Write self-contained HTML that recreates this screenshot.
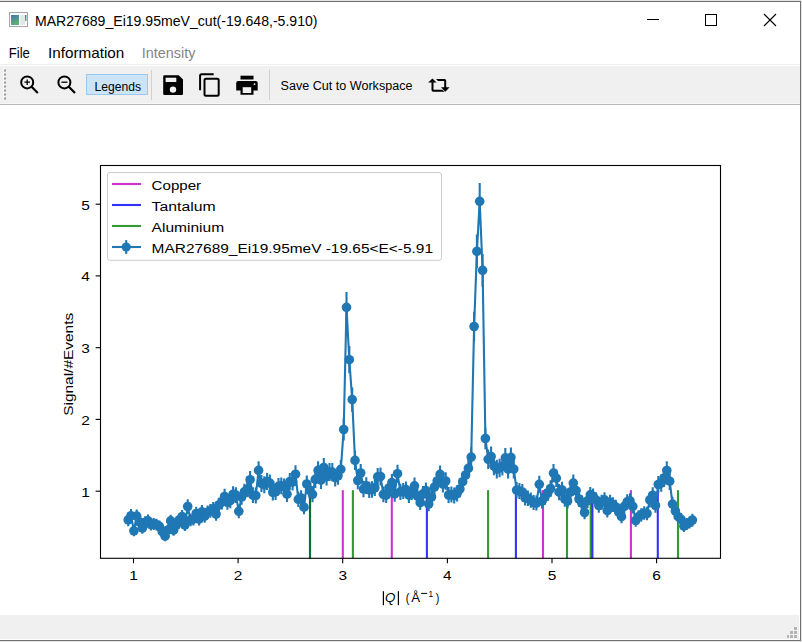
<!DOCTYPE html><html><head><meta charset="utf-8"><style>html,body{margin:0;padding:0;background:#fff;overflow:hidden}svg{display:block}</style></head><body>
<svg width="802" height="642" viewBox="0 0 802 642" font-family='"Liberation Sans", sans-serif'>
<rect x="0" y="0" width="802" height="642" fill="#ffffff"/>
<rect x="0" y="64" width="800" height="1" fill="#eeeeee"/>
<rect x="0" y="66" width="800" height="37" fill="#f0f0f0"/>
<rect x="0" y="103" width="800" height="1" fill="#f7f7f7"/>
<rect x="0" y="104" width="800" height="1" fill="#bababa"/>
<rect x="0" y="615" width="799" height="24" fill="#f0f0f0"/>
<rect x="0" y="0" width="802" height="1" fill="#e4e4e4"/>
<rect x="0" y="1" width="801" height="1" fill="#707070"/>
<rect x="800" y="1" width="1" height="640" fill="#707070"/>
<rect x="801" y="0" width="1" height="642" fill="#e4e4e4"/>
<rect x="0" y="640" width="801" height="1" fill="#707070"/>
<rect x="0" y="641" width="802" height="1" fill="#e4e4e4"/>
<rect x="794" y="627" width="3" height="3" fill="#b4b4b4"/>
<rect x="790" y="631" width="3" height="3" fill="#b4b4b4"/>
<rect x="794" y="631" width="3" height="3" fill="#b4b4b4"/>
<rect x="787" y="635" width="2" height="3" fill="#b4b4b4"/>
<rect x="790" y="635" width="3" height="3" fill="#b4b4b4"/>
<rect x="794" y="635" width="3" height="3" fill="#b4b4b4"/>
<rect x="9.5" y="12.5" width="18" height="14" fill="#ffffff" stroke="#a2a6ad" stroke-width="1"/>
<defs><linearGradient id="ig" x1="0" y1="0" x2="0.3" y2="1"><stop offset="0" stop-color="#4677b4"/><stop offset="1" stop-color="#5cb070"/></linearGradient></defs>
<rect x="11" y="15" width="8" height="10" fill="url(#ig)"/>
<rect x="20" y="15" width="5" height="10" fill="#e6e6e6"/>
<rect x="25" y="15" width="1.5" height="6" fill="url(#ig)"/>
<text x="35" y="25.8" font-size="15" fill="#000" textLength="282.5" lengthAdjust="spacingAndGlyphs">MAR27689_Ei19.95meV_cut(-19.648,-5.910)</text>
<rect x="647" y="19" width="12" height="1" fill="#000"/>
<rect x="705.5" y="14.5" width="11" height="11" fill="none" stroke="#000" stroke-width="1"/>
<path d="M764 14 L776 26 M776 14 L764 26" stroke="#000" stroke-width="1.1" fill="none"/>
<text x="8.7" y="57.5" font-size="15" fill="#000" textLength="21.2" lengthAdjust="spacingAndGlyphs">File</text>
<text x="48" y="57.5" font-size="15" fill="#000" textLength="76.3" lengthAdjust="spacingAndGlyphs">Information</text>
<text x="141.8" y="57.5" font-size="15" fill="#858585" textLength="53.6" lengthAdjust="spacingAndGlyphs">Intensity</text>
<rect x="3" y="68.5" width="2" height="2" fill="#ffffff"/>
<rect x="4" y="69.5" width="2" height="2" fill="#9a9a9a"/>
<rect x="3" y="72.5" width="2" height="2" fill="#ffffff"/>
<rect x="4" y="73.5" width="2" height="2" fill="#9a9a9a"/>
<rect x="3" y="76.5" width="2" height="2" fill="#ffffff"/>
<rect x="4" y="77.5" width="2" height="2" fill="#9a9a9a"/>
<rect x="3" y="80.5" width="2" height="2" fill="#ffffff"/>
<rect x="4" y="81.5" width="2" height="2" fill="#9a9a9a"/>
<rect x="3" y="84.5" width="2" height="2" fill="#ffffff"/>
<rect x="4" y="85.5" width="2" height="2" fill="#9a9a9a"/>
<rect x="3" y="88.5" width="2" height="2" fill="#ffffff"/>
<rect x="4" y="89.5" width="2" height="2" fill="#9a9a9a"/>
<rect x="3" y="92.5" width="2" height="2" fill="#ffffff"/>
<rect x="4" y="93.5" width="2" height="2" fill="#9a9a9a"/>
<rect x="3" y="96.5" width="2" height="2" fill="#ffffff"/>
<rect x="4" y="97.5" width="2" height="2" fill="#9a9a9a"/>
<circle cx="27.2" cy="82.4" r="6" fill="none" stroke="#000" stroke-width="2"/>
<path d="M31.6 86.8 L37.8 93" stroke="#000" stroke-width="2.2" stroke-linecap="butt"/>
<path d="M24.4 82.2 H30 M27.2 79.4 V85" stroke="#000" stroke-width="1.3"/>
<circle cx="64.4" cy="82.4" r="6" fill="none" stroke="#000" stroke-width="2"/>
<path d="M68.8 86.8 L75 93" stroke="#000" stroke-width="2.2"/>
<path d="M61.4 82.2 H67.4" stroke="#000" stroke-width="1.3"/>
<rect x="86.5" y="74.5" width="61" height="20" fill="#cce4f7" stroke="#99c9ef" stroke-width="1"/>
<text x="94.5" y="90.5" font-size="12.5" fill="#000" textLength="46.5" lengthAdjust="spacingAndGlyphs">Legends</text>
<rect x="151" y="70" width="1" height="30" fill="#d0d0d0"/>
<rect x="269" y="70" width="1" height="30" fill="#d0d0d0"/>
<path d="M163.2 76.5 Q163.2 75.2 164.5 75.2 L178.7 75.2 L183 79.5 L183 93.7 Q183 95 181.7 95 L164.5 95 Q163.2 95 163.2 93.7 Z" fill="#000"/>
<rect x="165.6" y="77.7" width="10.7" height="4.3" fill="#f0f0f0"/>
<circle cx="173" cy="89.6" r="3.2" fill="#f0f0f0"/>
<path d="M200.1 90.2 V75.8 Q200.1 74.2 201.7 74.2 H213.7" fill="none" stroke="#000" stroke-width="2"/>
<rect x="204.5" y="78.7" width="14.2" height="17" rx="1.5" fill="none" stroke="#000" stroke-width="2"/>
<rect x="240.5" y="75.7" width="13" height="3.8" fill="#000"/>
<path d="M236.2 83 Q236.2 81 238.2 81 L255.7 81 Q257.7 81 257.7 83 L257.7 90.5 L253.5 90.5 L253.5 94.7 L240.5 94.7 L240.5 90.5 L236.2 90.5 Z" fill="#000"/>
<rect x="242.7" y="87.2" width="8.5" height="5.8" fill="#f0f0f0"/>
<circle cx="254.5" cy="84.2" r="0.9" fill="#f0f0f0"/>
<text x="280.5" y="90" font-size="12.5" fill="#000" textLength="132" lengthAdjust="spacingAndGlyphs">Save Cut to Workspace</text>
<path d="M432.4 78.4 L428.2 82.6 L436.6 82.6 Z" fill="#000"/>
<path d="M431.5 82 V90 Q431.5 91.7 433.2 91.7 H444.5 L442.5 89.7 H433.5 V82 Z" fill="#000"/>
<path d="M436 79 H444.5 Q446.2 79 446.2 80.7 V88 H444.2 V81 H438 Z" fill="#000"/>
<path d="M441 87.3 L449.6 87.3 L445.3 91.8 Z" fill="#000"/>
<line x1="310.0" y1="558.3" x2="310.0" y2="490.15999999999997" stroke="#0000ff" stroke-opacity="0.8" stroke-width="2.1"/>
<line x1="310.0" y1="558.3" x2="310.0" y2="490.15999999999997" stroke="#008000" stroke-opacity="0.8" stroke-width="2.1"/>
<line x1="342.8" y1="558.3" x2="342.8" y2="490.15999999999997" stroke="#bf00bf" stroke-opacity="0.8" stroke-width="2.1"/>
<line x1="352.9" y1="558.3" x2="352.9" y2="490.15999999999997" stroke="#008000" stroke-opacity="0.8" stroke-width="2.1"/>
<line x1="391.8" y1="558.3" x2="391.8" y2="490.15999999999997" stroke="#bf00bf" stroke-opacity="0.8" stroke-width="2.1"/>
<line x1="426.9" y1="558.3" x2="426.9" y2="490.15999999999997" stroke="#0000ff" stroke-opacity="0.8" stroke-width="2.1"/>
<line x1="488.1" y1="558.3" x2="488.1" y2="490.15999999999997" stroke="#008000" stroke-opacity="0.8" stroke-width="2.1"/>
<line x1="515.9" y1="558.3" x2="515.9" y2="490.15999999999997" stroke="#0000ff" stroke-opacity="0.8" stroke-width="2.1"/>
<line x1="543.0" y1="558.3" x2="543.0" y2="490.15999999999997" stroke="#bf00bf" stroke-opacity="0.8" stroke-width="2.1"/>
<line x1="567.0" y1="558.3" x2="567.0" y2="490.15999999999997" stroke="#008000" stroke-opacity="0.8" stroke-width="2.1"/>
<line x1="590.7" y1="558.3" x2="590.7" y2="490.15999999999997" stroke="#008000" stroke-opacity="0.8" stroke-width="2.1"/>
<line x1="592.4" y1="558.3" x2="592.4" y2="490.15999999999997" stroke="#0000ff" stroke-opacity="0.8" stroke-width="2.1"/>
<line x1="630.9" y1="558.3" x2="630.9" y2="490.15999999999997" stroke="#bf00bf" stroke-opacity="0.8" stroke-width="2.1"/>
<line x1="657.8" y1="558.3" x2="657.8" y2="490.15999999999997" stroke="#0000ff" stroke-opacity="0.8" stroke-width="2.1"/>
<line x1="678.0" y1="558.3" x2="678.0" y2="490.15999999999997" stroke="#008000" stroke-opacity="0.8" stroke-width="2.1"/>
<path d="M128.2 513.6V526.2M131.0 509.1V522.3M133.9 525.4V536.2M136.7 509.5V522.7M139.5 515.9V528.1M142.4 522.3V533.7M145.2 516.3V528.5M148.0 514.6V527.0M150.9 518.6V530.4M153.7 517.9V529.9M156.5 518.8V530.6M159.4 520.5V532.1M162.2 526.2V537.0M165.1 531.2V541.2M167.9 524.5V535.5M170.7 514.7V527.1M173.6 524.7V535.7M176.4 519.1V530.9M179.2 513.7V526.3M182.1 510.1V523.1M184.9 519.2V531.0M187.7 499.3V513.7M190.6 513.7V526.3M193.4 512.9V525.5M196.2 506.8V520.2M199.1 512.9V525.5M201.9 505.1V518.7M204.7 509.5V522.7M207.6 505.4V519.0M210.4 504.0V517.8M213.2 501.9V515.9M216.1 507.4V520.8M218.9 497.7V512.3M221.8 494.5V509.5M224.6 488.7V504.3M227.4 495.0V509.8M230.3 493.0V508.2M233.1 486.3V502.1M235.9 487.2V503.0M238.8 504.4V518.2M241.6 489.2V504.8M244.4 483.8V500.0M247.3 480.8V497.2M250.1 471.0V488.4M252.9 487.3V503.1M255.8 487.6V503.4M258.6 461.2V479.6M261.4 474.9V491.9M264.3 476.3V493.3M267.1 472.9V490.1M269.9 474.5V491.7M272.8 484.4V500.4M275.6 483.7V499.9M278.5 477.9V494.7M281.3 477.4V494.2M284.1 478.4V495.2M287.0 486.3V502.1M289.8 473.0V490.2M292.6 473.4V490.6M295.5 465.2V483.2M298.3 491.7V506.9M301.1 490.3V505.7M304.0 500.1V514.3M306.8 475.5V492.5M309.6 481.8V498.2M312.5 486.4V502.2M315.3 470.7V488.1M318.1 461.2V479.6M321.0 471.5V488.9M323.8 458.1V476.9M326.6 467.6V485.4M329.5 462.9V481.1M332.3 463.0V481.2M335.2 468.9V486.5M338.0 466.9V484.7M340.8 460.0V478.6M343.7 418.4V440.6M346.5 292.1V322.7M349.3 346.1V373.3M352.2 387.4V411.8M355.0 450.7V470.1M357.8 471.8V489.2M360.7 463.9V482.1M363.5 480.8V497.2M366.3 477.3V494.1M369.2 481.7V498.1M372.0 481.3V497.7M374.8 479.5V496.1M377.7 467.9V485.7M380.5 467.6V485.4M383.4 486.4V502.2M386.2 487.3V503.1M389.0 479.7V496.3M391.9 474.0V491.2M394.7 485.8V501.8M397.5 464.7V482.7M400.4 483.8V500.0M403.2 482.9V499.1M406.0 481.4V497.8M408.9 487.3V503.1M411.7 483.9V500.1M414.5 477.4V494.2M417.4 488.2V503.8M420.2 495.3V510.1M423.0 486.1V501.9M425.9 482.5V498.7M428.7 496.7V511.3M431.5 489.2V504.8M434.4 478.8V495.4M437.2 472.3V489.7M440.1 465.4V483.4M442.9 475.5V492.5M445.7 472.3V489.7M448.6 487.1V502.9M451.4 486.6V502.4M454.2 487.6V503.4M457.1 485.6V501.6M459.9 480.8V497.2M462.7 473.1V490.3M465.6 466.0V484.0M468.4 459.1V477.7M471.2 447.3V466.9M474.1 311.8V341.2M476.9 234.5V268.3M479.7 183.1V219.5M482.6 253.9V286.7M485.4 427.8V449.2M488.2 449.6V469.0M491.1 446.6V466.4M493.9 456.4V475.2M496.8 459.8V478.4M499.6 458.7V477.3M502.4 456.6V475.4M505.3 448.1V467.7M508.1 459.8V478.4M510.9 447.6V467.2M513.8 459.8V478.4M516.6 481.9V498.3M519.4 482.9V499.1M522.3 483.9V500.1M525.1 490.2V505.6M527.9 490.6V506.0M530.8 492.6V507.8M533.6 495.1V509.9M536.4 495.6V510.4M539.3 475.8V492.8M542.1 493.5V508.5M544.9 489.2V504.8M547.8 485.0V501.0M550.6 480.2V496.8M553.5 464.0V482.2M556.3 469.4V487.0M559.1 484.1V500.3M562.0 481.7V498.1M564.8 491.3V506.7M567.6 493.6V508.6M570.5 483.9V500.1M573.3 474.5V491.7M576.1 482.5V498.7M579.0 491.3V506.7M581.8 495.6V510.4M584.6 505.7V519.3M587.5 493.3V508.3M590.3 486.9V502.7M593.1 488.4V504.0M596.0 492.4V507.6M598.8 498.2V512.8M601.6 494.7V509.7M604.5 492.3V507.5M607.3 503.8V517.6M610.1 494.7V509.7M613.0 497.3V511.9M615.8 499.8V514.2M618.7 505.2V518.8M621.5 510.2V523.2M624.3 499.2V513.6M627.2 494.3V509.3M630.0 493.3V508.3M632.8 499.2V513.6M635.7 514.3V526.7M638.5 510.2V523.2M641.3 508.3V521.5M644.2 506.2V519.8M647.0 506.8V520.2M649.8 492.3V507.5M652.7 487.3V503.1M655.5 498.2V512.8M658.3 476.0V493.0M661.2 474.5V491.7M664.0 469.2V486.8M666.8 461.3V479.7M669.7 472.5V489.9M672.5 496.8V511.4M675.4 504.2V518.0M678.2 510.2V523.2M681.0 513.1V525.7M683.9 520.4V532.0M686.7 518.0V530.0M689.5 516.4V528.6M692.4 513.8V526.4" stroke="#1f77b4" stroke-width="2.1" fill="none"/>
<path d="M128.2 519.9 L131.0 515.7 L133.9 530.8 L136.7 516.1 L139.5 522.0 L142.4 528.0 L145.2 522.4 L148.0 520.8 L150.9 524.5 L153.7 523.9 L156.5 524.7 L159.4 526.3 L162.2 531.6 L165.1 536.2 L167.9 530.0 L170.7 520.9 L173.6 530.2 L176.4 525.0 L179.2 520.0 L182.1 516.6 L184.9 525.1 L187.7 506.5 L190.6 520.0 L193.4 519.2 L196.2 513.5 L199.1 519.2 L201.9 511.9 L204.7 516.1 L207.6 512.2 L210.4 510.9 L213.2 508.9 L216.1 514.1 L218.9 505.0 L221.8 502.0 L224.6 496.5 L227.4 502.4 L230.3 500.6 L233.1 494.2 L235.9 495.1 L238.8 511.3 L241.6 497.0 L244.4 491.9 L247.3 489.0 L250.1 479.7 L252.9 495.2 L255.8 495.5 L258.6 470.4 L261.4 483.4 L264.3 484.8 L267.1 481.5 L269.9 483.1 L272.8 492.4 L275.6 491.8 L278.5 486.3 L281.3 485.8 L284.1 486.8 L287.0 494.2 L289.8 481.6 L292.6 482.0 L295.5 474.2 L298.3 499.3 L301.1 498.0 L304.0 507.2 L306.8 484.0 L309.6 490.0 L312.5 494.3 L315.3 479.4 L318.1 470.4 L321.0 480.2 L323.8 467.5 L326.6 476.5 L329.5 472.0 L332.3 472.1 L335.2 477.7 L338.0 475.8 L340.8 469.3 L343.7 429.5 L346.5 307.4 L349.3 359.7 L352.2 399.6 L355.0 460.4 L357.8 480.5 L360.7 473.0 L363.5 489.0 L366.3 485.7 L369.2 489.9 L372.0 489.5 L374.8 487.8 L377.7 476.8 L380.5 476.5 L383.4 494.3 L386.2 495.2 L389.0 488.0 L391.9 482.6 L394.7 493.8 L397.5 473.7 L400.4 491.9 L403.2 491.0 L406.0 489.6 L408.9 495.2 L411.7 492.0 L414.5 485.8 L417.4 496.0 L420.2 502.7 L423.0 494.0 L425.9 490.6 L428.7 504.0 L431.5 497.0 L434.4 487.1 L437.2 481.0 L440.1 474.4 L442.9 484.0 L445.7 481.0 L448.6 495.0 L451.4 494.5 L454.2 495.5 L457.1 493.6 L459.9 489.0 L462.7 481.7 L465.6 475.0 L468.4 468.4 L471.2 457.1 L474.1 326.5 L476.9 251.4 L479.7 201.3 L482.6 270.3 L485.4 438.5 L488.2 459.3 L491.1 456.5 L493.9 465.8 L496.8 469.1 L499.6 468.0 L502.4 466.0 L505.3 457.9 L508.1 469.1 L510.9 457.4 L513.8 469.1 L516.6 490.1 L519.4 491.0 L522.3 492.0 L525.1 497.9 L527.9 498.3 L530.8 500.2 L533.6 502.5 L536.4 503.0 L539.3 484.3 L542.1 501.0 L544.9 497.0 L547.8 493.0 L550.6 488.5 L553.5 473.1 L556.3 478.2 L559.1 492.2 L562.0 489.9 L564.8 499.0 L567.6 501.1 L570.5 492.0 L573.3 483.1 L576.1 490.6 L579.0 499.0 L581.8 503.0 L584.6 512.5 L587.5 500.8 L590.3 494.8 L593.1 496.2 L596.0 500.0 L598.8 505.5 L601.6 502.2 L604.5 499.9 L607.3 510.7 L610.1 502.2 L613.0 504.6 L615.8 507.0 L618.7 512.0 L621.5 516.7 L624.3 506.4 L627.2 501.8 L630.0 500.8 L632.8 506.4 L635.7 520.5 L638.5 516.7 L641.3 514.9 L644.2 513.0 L647.0 513.5 L649.8 499.9 L652.7 495.2 L655.5 505.5 L658.3 484.5 L661.2 483.1 L664.0 478.0 L666.8 470.5 L669.7 481.2 L672.5 504.1 L675.4 511.1 L678.2 516.7 L681.0 519.4 L683.9 526.2 L686.7 524.0 L689.5 522.5 L692.4 520.1" stroke="#1f77b4" stroke-width="2.1" fill="none" stroke-linejoin="round"/>
<circle cx="128.2" cy="519.9" r="4.8" fill="#1f77b4"/>
<circle cx="131.0" cy="515.7" r="4.8" fill="#1f77b4"/>
<circle cx="133.9" cy="530.8" r="4.8" fill="#1f77b4"/>
<circle cx="136.7" cy="516.1" r="4.8" fill="#1f77b4"/>
<circle cx="139.5" cy="522.0" r="4.8" fill="#1f77b4"/>
<circle cx="142.4" cy="528.0" r="4.8" fill="#1f77b4"/>
<circle cx="145.2" cy="522.4" r="4.8" fill="#1f77b4"/>
<circle cx="148.0" cy="520.8" r="4.8" fill="#1f77b4"/>
<circle cx="150.9" cy="524.5" r="4.8" fill="#1f77b4"/>
<circle cx="153.7" cy="523.9" r="4.8" fill="#1f77b4"/>
<circle cx="156.5" cy="524.7" r="4.8" fill="#1f77b4"/>
<circle cx="159.4" cy="526.3" r="4.8" fill="#1f77b4"/>
<circle cx="162.2" cy="531.6" r="4.8" fill="#1f77b4"/>
<circle cx="165.1" cy="536.2" r="4.8" fill="#1f77b4"/>
<circle cx="167.9" cy="530.0" r="4.8" fill="#1f77b4"/>
<circle cx="170.7" cy="520.9" r="4.8" fill="#1f77b4"/>
<circle cx="173.6" cy="530.2" r="4.8" fill="#1f77b4"/>
<circle cx="176.4" cy="525.0" r="4.8" fill="#1f77b4"/>
<circle cx="179.2" cy="520.0" r="4.8" fill="#1f77b4"/>
<circle cx="182.1" cy="516.6" r="4.8" fill="#1f77b4"/>
<circle cx="184.9" cy="525.1" r="4.8" fill="#1f77b4"/>
<circle cx="187.7" cy="506.5" r="4.8" fill="#1f77b4"/>
<circle cx="190.6" cy="520.0" r="4.8" fill="#1f77b4"/>
<circle cx="193.4" cy="519.2" r="4.8" fill="#1f77b4"/>
<circle cx="196.2" cy="513.5" r="4.8" fill="#1f77b4"/>
<circle cx="199.1" cy="519.2" r="4.8" fill="#1f77b4"/>
<circle cx="201.9" cy="511.9" r="4.8" fill="#1f77b4"/>
<circle cx="204.7" cy="516.1" r="4.8" fill="#1f77b4"/>
<circle cx="207.6" cy="512.2" r="4.8" fill="#1f77b4"/>
<circle cx="210.4" cy="510.9" r="4.8" fill="#1f77b4"/>
<circle cx="213.2" cy="508.9" r="4.8" fill="#1f77b4"/>
<circle cx="216.1" cy="514.1" r="4.8" fill="#1f77b4"/>
<circle cx="218.9" cy="505.0" r="4.8" fill="#1f77b4"/>
<circle cx="221.8" cy="502.0" r="4.8" fill="#1f77b4"/>
<circle cx="224.6" cy="496.5" r="4.8" fill="#1f77b4"/>
<circle cx="227.4" cy="502.4" r="4.8" fill="#1f77b4"/>
<circle cx="230.3" cy="500.6" r="4.8" fill="#1f77b4"/>
<circle cx="233.1" cy="494.2" r="4.8" fill="#1f77b4"/>
<circle cx="235.9" cy="495.1" r="4.8" fill="#1f77b4"/>
<circle cx="238.8" cy="511.3" r="4.8" fill="#1f77b4"/>
<circle cx="241.6" cy="497.0" r="4.8" fill="#1f77b4"/>
<circle cx="244.4" cy="491.9" r="4.8" fill="#1f77b4"/>
<circle cx="247.3" cy="489.0" r="4.8" fill="#1f77b4"/>
<circle cx="250.1" cy="479.7" r="4.8" fill="#1f77b4"/>
<circle cx="252.9" cy="495.2" r="4.8" fill="#1f77b4"/>
<circle cx="255.8" cy="495.5" r="4.8" fill="#1f77b4"/>
<circle cx="258.6" cy="470.4" r="4.8" fill="#1f77b4"/>
<circle cx="261.4" cy="483.4" r="4.8" fill="#1f77b4"/>
<circle cx="264.3" cy="484.8" r="4.8" fill="#1f77b4"/>
<circle cx="267.1" cy="481.5" r="4.8" fill="#1f77b4"/>
<circle cx="269.9" cy="483.1" r="4.8" fill="#1f77b4"/>
<circle cx="272.8" cy="492.4" r="4.8" fill="#1f77b4"/>
<circle cx="275.6" cy="491.8" r="4.8" fill="#1f77b4"/>
<circle cx="278.5" cy="486.3" r="4.8" fill="#1f77b4"/>
<circle cx="281.3" cy="485.8" r="4.8" fill="#1f77b4"/>
<circle cx="284.1" cy="486.8" r="4.8" fill="#1f77b4"/>
<circle cx="287.0" cy="494.2" r="4.8" fill="#1f77b4"/>
<circle cx="289.8" cy="481.6" r="4.8" fill="#1f77b4"/>
<circle cx="292.6" cy="482.0" r="4.8" fill="#1f77b4"/>
<circle cx="295.5" cy="474.2" r="4.8" fill="#1f77b4"/>
<circle cx="298.3" cy="499.3" r="4.8" fill="#1f77b4"/>
<circle cx="301.1" cy="498.0" r="4.8" fill="#1f77b4"/>
<circle cx="304.0" cy="507.2" r="4.8" fill="#1f77b4"/>
<circle cx="306.8" cy="484.0" r="4.8" fill="#1f77b4"/>
<circle cx="309.6" cy="490.0" r="4.8" fill="#1f77b4"/>
<circle cx="312.5" cy="494.3" r="4.8" fill="#1f77b4"/>
<circle cx="315.3" cy="479.4" r="4.8" fill="#1f77b4"/>
<circle cx="318.1" cy="470.4" r="4.8" fill="#1f77b4"/>
<circle cx="321.0" cy="480.2" r="4.8" fill="#1f77b4"/>
<circle cx="323.8" cy="467.5" r="4.8" fill="#1f77b4"/>
<circle cx="326.6" cy="476.5" r="4.8" fill="#1f77b4"/>
<circle cx="329.5" cy="472.0" r="4.8" fill="#1f77b4"/>
<circle cx="332.3" cy="472.1" r="4.8" fill="#1f77b4"/>
<circle cx="335.2" cy="477.7" r="4.8" fill="#1f77b4"/>
<circle cx="338.0" cy="475.8" r="4.8" fill="#1f77b4"/>
<circle cx="340.8" cy="469.3" r="4.8" fill="#1f77b4"/>
<circle cx="343.7" cy="429.5" r="4.8" fill="#1f77b4"/>
<circle cx="346.5" cy="307.4" r="4.8" fill="#1f77b4"/>
<circle cx="349.3" cy="359.7" r="4.8" fill="#1f77b4"/>
<circle cx="352.2" cy="399.6" r="4.8" fill="#1f77b4"/>
<circle cx="355.0" cy="460.4" r="4.8" fill="#1f77b4"/>
<circle cx="357.8" cy="480.5" r="4.8" fill="#1f77b4"/>
<circle cx="360.7" cy="473.0" r="4.8" fill="#1f77b4"/>
<circle cx="363.5" cy="489.0" r="4.8" fill="#1f77b4"/>
<circle cx="366.3" cy="485.7" r="4.8" fill="#1f77b4"/>
<circle cx="369.2" cy="489.9" r="4.8" fill="#1f77b4"/>
<circle cx="372.0" cy="489.5" r="4.8" fill="#1f77b4"/>
<circle cx="374.8" cy="487.8" r="4.8" fill="#1f77b4"/>
<circle cx="377.7" cy="476.8" r="4.8" fill="#1f77b4"/>
<circle cx="380.5" cy="476.5" r="4.8" fill="#1f77b4"/>
<circle cx="383.4" cy="494.3" r="4.8" fill="#1f77b4"/>
<circle cx="386.2" cy="495.2" r="4.8" fill="#1f77b4"/>
<circle cx="389.0" cy="488.0" r="4.8" fill="#1f77b4"/>
<circle cx="391.9" cy="482.6" r="4.8" fill="#1f77b4"/>
<circle cx="394.7" cy="493.8" r="4.8" fill="#1f77b4"/>
<circle cx="397.5" cy="473.7" r="4.8" fill="#1f77b4"/>
<circle cx="400.4" cy="491.9" r="4.8" fill="#1f77b4"/>
<circle cx="403.2" cy="491.0" r="4.8" fill="#1f77b4"/>
<circle cx="406.0" cy="489.6" r="4.8" fill="#1f77b4"/>
<circle cx="408.9" cy="495.2" r="4.8" fill="#1f77b4"/>
<circle cx="411.7" cy="492.0" r="4.8" fill="#1f77b4"/>
<circle cx="414.5" cy="485.8" r="4.8" fill="#1f77b4"/>
<circle cx="417.4" cy="496.0" r="4.8" fill="#1f77b4"/>
<circle cx="420.2" cy="502.7" r="4.8" fill="#1f77b4"/>
<circle cx="423.0" cy="494.0" r="4.8" fill="#1f77b4"/>
<circle cx="425.9" cy="490.6" r="4.8" fill="#1f77b4"/>
<circle cx="428.7" cy="504.0" r="4.8" fill="#1f77b4"/>
<circle cx="431.5" cy="497.0" r="4.8" fill="#1f77b4"/>
<circle cx="434.4" cy="487.1" r="4.8" fill="#1f77b4"/>
<circle cx="437.2" cy="481.0" r="4.8" fill="#1f77b4"/>
<circle cx="440.1" cy="474.4" r="4.8" fill="#1f77b4"/>
<circle cx="442.9" cy="484.0" r="4.8" fill="#1f77b4"/>
<circle cx="445.7" cy="481.0" r="4.8" fill="#1f77b4"/>
<circle cx="448.6" cy="495.0" r="4.8" fill="#1f77b4"/>
<circle cx="451.4" cy="494.5" r="4.8" fill="#1f77b4"/>
<circle cx="454.2" cy="495.5" r="4.8" fill="#1f77b4"/>
<circle cx="457.1" cy="493.6" r="4.8" fill="#1f77b4"/>
<circle cx="459.9" cy="489.0" r="4.8" fill="#1f77b4"/>
<circle cx="462.7" cy="481.7" r="4.8" fill="#1f77b4"/>
<circle cx="465.6" cy="475.0" r="4.8" fill="#1f77b4"/>
<circle cx="468.4" cy="468.4" r="4.8" fill="#1f77b4"/>
<circle cx="471.2" cy="457.1" r="4.8" fill="#1f77b4"/>
<circle cx="474.1" cy="326.5" r="4.8" fill="#1f77b4"/>
<circle cx="476.9" cy="251.4" r="4.8" fill="#1f77b4"/>
<circle cx="479.7" cy="201.3" r="4.8" fill="#1f77b4"/>
<circle cx="482.6" cy="270.3" r="4.8" fill="#1f77b4"/>
<circle cx="485.4" cy="438.5" r="4.8" fill="#1f77b4"/>
<circle cx="488.2" cy="459.3" r="4.8" fill="#1f77b4"/>
<circle cx="491.1" cy="456.5" r="4.8" fill="#1f77b4"/>
<circle cx="493.9" cy="465.8" r="4.8" fill="#1f77b4"/>
<circle cx="496.8" cy="469.1" r="4.8" fill="#1f77b4"/>
<circle cx="499.6" cy="468.0" r="4.8" fill="#1f77b4"/>
<circle cx="502.4" cy="466.0" r="4.8" fill="#1f77b4"/>
<circle cx="505.3" cy="457.9" r="4.8" fill="#1f77b4"/>
<circle cx="508.1" cy="469.1" r="4.8" fill="#1f77b4"/>
<circle cx="510.9" cy="457.4" r="4.8" fill="#1f77b4"/>
<circle cx="513.8" cy="469.1" r="4.8" fill="#1f77b4"/>
<circle cx="516.6" cy="490.1" r="4.8" fill="#1f77b4"/>
<circle cx="519.4" cy="491.0" r="4.8" fill="#1f77b4"/>
<circle cx="522.3" cy="492.0" r="4.8" fill="#1f77b4"/>
<circle cx="525.1" cy="497.9" r="4.8" fill="#1f77b4"/>
<circle cx="527.9" cy="498.3" r="4.8" fill="#1f77b4"/>
<circle cx="530.8" cy="500.2" r="4.8" fill="#1f77b4"/>
<circle cx="533.6" cy="502.5" r="4.8" fill="#1f77b4"/>
<circle cx="536.4" cy="503.0" r="4.8" fill="#1f77b4"/>
<circle cx="539.3" cy="484.3" r="4.8" fill="#1f77b4"/>
<circle cx="542.1" cy="501.0" r="4.8" fill="#1f77b4"/>
<circle cx="544.9" cy="497.0" r="4.8" fill="#1f77b4"/>
<circle cx="547.8" cy="493.0" r="4.8" fill="#1f77b4"/>
<circle cx="550.6" cy="488.5" r="4.8" fill="#1f77b4"/>
<circle cx="553.5" cy="473.1" r="4.8" fill="#1f77b4"/>
<circle cx="556.3" cy="478.2" r="4.8" fill="#1f77b4"/>
<circle cx="559.1" cy="492.2" r="4.8" fill="#1f77b4"/>
<circle cx="562.0" cy="489.9" r="4.8" fill="#1f77b4"/>
<circle cx="564.8" cy="499.0" r="4.8" fill="#1f77b4"/>
<circle cx="567.6" cy="501.1" r="4.8" fill="#1f77b4"/>
<circle cx="570.5" cy="492.0" r="4.8" fill="#1f77b4"/>
<circle cx="573.3" cy="483.1" r="4.8" fill="#1f77b4"/>
<circle cx="576.1" cy="490.6" r="4.8" fill="#1f77b4"/>
<circle cx="579.0" cy="499.0" r="4.8" fill="#1f77b4"/>
<circle cx="581.8" cy="503.0" r="4.8" fill="#1f77b4"/>
<circle cx="584.6" cy="512.5" r="4.8" fill="#1f77b4"/>
<circle cx="587.5" cy="500.8" r="4.8" fill="#1f77b4"/>
<circle cx="590.3" cy="494.8" r="4.8" fill="#1f77b4"/>
<circle cx="593.1" cy="496.2" r="4.8" fill="#1f77b4"/>
<circle cx="596.0" cy="500.0" r="4.8" fill="#1f77b4"/>
<circle cx="598.8" cy="505.5" r="4.8" fill="#1f77b4"/>
<circle cx="601.6" cy="502.2" r="4.8" fill="#1f77b4"/>
<circle cx="604.5" cy="499.9" r="4.8" fill="#1f77b4"/>
<circle cx="607.3" cy="510.7" r="4.8" fill="#1f77b4"/>
<circle cx="610.1" cy="502.2" r="4.8" fill="#1f77b4"/>
<circle cx="613.0" cy="504.6" r="4.8" fill="#1f77b4"/>
<circle cx="615.8" cy="507.0" r="4.8" fill="#1f77b4"/>
<circle cx="618.7" cy="512.0" r="4.8" fill="#1f77b4"/>
<circle cx="621.5" cy="516.7" r="4.8" fill="#1f77b4"/>
<circle cx="624.3" cy="506.4" r="4.8" fill="#1f77b4"/>
<circle cx="627.2" cy="501.8" r="4.8" fill="#1f77b4"/>
<circle cx="630.0" cy="500.8" r="4.8" fill="#1f77b4"/>
<circle cx="632.8" cy="506.4" r="4.8" fill="#1f77b4"/>
<circle cx="635.7" cy="520.5" r="4.8" fill="#1f77b4"/>
<circle cx="638.5" cy="516.7" r="4.8" fill="#1f77b4"/>
<circle cx="641.3" cy="514.9" r="4.8" fill="#1f77b4"/>
<circle cx="644.2" cy="513.0" r="4.8" fill="#1f77b4"/>
<circle cx="647.0" cy="513.5" r="4.8" fill="#1f77b4"/>
<circle cx="649.8" cy="499.9" r="4.8" fill="#1f77b4"/>
<circle cx="652.7" cy="495.2" r="4.8" fill="#1f77b4"/>
<circle cx="655.5" cy="505.5" r="4.8" fill="#1f77b4"/>
<circle cx="658.3" cy="484.5" r="4.8" fill="#1f77b4"/>
<circle cx="661.2" cy="483.1" r="4.8" fill="#1f77b4"/>
<circle cx="664.0" cy="478.0" r="4.8" fill="#1f77b4"/>
<circle cx="666.8" cy="470.5" r="4.8" fill="#1f77b4"/>
<circle cx="669.7" cy="481.2" r="4.8" fill="#1f77b4"/>
<circle cx="672.5" cy="504.1" r="4.8" fill="#1f77b4"/>
<circle cx="675.4" cy="511.1" r="4.8" fill="#1f77b4"/>
<circle cx="678.2" cy="516.7" r="4.8" fill="#1f77b4"/>
<circle cx="681.0" cy="519.4" r="4.8" fill="#1f77b4"/>
<circle cx="683.9" cy="526.2" r="4.8" fill="#1f77b4"/>
<circle cx="686.7" cy="524.0" r="4.8" fill="#1f77b4"/>
<circle cx="689.5" cy="522.5" r="4.8" fill="#1f77b4"/>
<circle cx="692.4" cy="520.1" r="4.8" fill="#1f77b4"/>
<rect x="100.5" y="165.5" width="620.0" height="392.79999999999995" fill="none" stroke="#000" stroke-width="1.1"/>
<line x1="133.5" y1="558.3" x2="133.5" y2="563.1999999999999" stroke="#000" stroke-width="1.1"/>
<text x="129.2" y="580.3" font-size="13.7" fill="#000" textLength="8.6" lengthAdjust="spacingAndGlyphs">1</text>
<line x1="238.1" y1="558.3" x2="238.1" y2="563.1999999999999" stroke="#000" stroke-width="1.1"/>
<text x="233.8" y="580.3" font-size="13.7" fill="#000" textLength="8.6" lengthAdjust="spacingAndGlyphs">2</text>
<line x1="342.7" y1="558.3" x2="342.7" y2="563.1999999999999" stroke="#000" stroke-width="1.1"/>
<text x="338.4" y="580.3" font-size="13.7" fill="#000" textLength="8.6" lengthAdjust="spacingAndGlyphs">3</text>
<line x1="447.4" y1="558.3" x2="447.4" y2="563.1999999999999" stroke="#000" stroke-width="1.1"/>
<text x="443.1" y="580.3" font-size="13.7" fill="#000" textLength="8.6" lengthAdjust="spacingAndGlyphs">4</text>
<line x1="552.0" y1="558.3" x2="552.0" y2="563.1999999999999" stroke="#000" stroke-width="1.1"/>
<text x="547.7" y="580.3" font-size="13.7" fill="#000" textLength="8.6" lengthAdjust="spacingAndGlyphs">5</text>
<line x1="656.6" y1="558.3" x2="656.6" y2="563.1999999999999" stroke="#000" stroke-width="1.1"/>
<text x="652.3" y="580.3" font-size="13.7" fill="#000" textLength="8.6" lengthAdjust="spacingAndGlyphs">6</text>
<line x1="95.6" y1="491.2" x2="100.5" y2="491.2" stroke="#000" stroke-width="1.1"/>
<text x="81.2" y="496.7" font-size="13.7" fill="#000" textLength="8.6" lengthAdjust="spacingAndGlyphs">1</text>
<line x1="95.6" y1="419.4" x2="100.5" y2="419.4" stroke="#000" stroke-width="1.1"/>
<text x="81.2" y="424.9" font-size="13.7" fill="#000" textLength="8.6" lengthAdjust="spacingAndGlyphs">2</text>
<line x1="95.6" y1="347.7" x2="100.5" y2="347.7" stroke="#000" stroke-width="1.1"/>
<text x="81.2" y="353.2" font-size="13.7" fill="#000" textLength="8.6" lengthAdjust="spacingAndGlyphs">3</text>
<line x1="95.6" y1="275.9" x2="100.5" y2="275.9" stroke="#000" stroke-width="1.1"/>
<text x="81.2" y="281.4" font-size="13.7" fill="#000" textLength="8.6" lengthAdjust="spacingAndGlyphs">4</text>
<line x1="95.6" y1="204.2" x2="100.5" y2="204.2" stroke="#000" stroke-width="1.1"/>
<text x="81.2" y="209.7" font-size="13.7" fill="#000" textLength="8.6" lengthAdjust="spacingAndGlyphs">5</text>
<g font-size="13.7" fill="#000">
<rect x="382.8" y="591.2" width="1.2" height="14" fill="#000"/>
<text x="385" y="601.6" font-style="italic" textLength="10.4" lengthAdjust="spacingAndGlyphs">Q</text>
<rect x="397.8" y="591.2" width="1.2" height="14" fill="#000"/>
<text x="405.8" y="601.6" textLength="3.6" lengthAdjust="spacingAndGlyphs">(</text>
<text x="411.3" y="601.6" textLength="8.8" lengthAdjust="spacingAndGlyphs">Å</text>
<rect x="421.1" y="592.9" width="6" height="1" fill="#000"/>
<text x="428.6" y="596.8" font-size="9.8" textLength="4.6" lengthAdjust="spacingAndGlyphs">1</text>
<text x="435.8" y="601.6" textLength="3.6" lengthAdjust="spacingAndGlyphs">)</text>
</g>
<text transform="translate(72.5 364.3) rotate(-90)" font-size="13.7" text-anchor="middle" fill="#000" textLength="103" lengthAdjust="spacingAndGlyphs">Signal/#Events</text>
<rect x="107.5" y="172.5" width="334" height="87.8" rx="2.5" fill="#ffffff" fill-opacity="0.8" stroke="#cccccc" stroke-width="1"/>
<line x1="112" y1="184" x2="141" y2="184" stroke="#bf00bf" stroke-opacity="0.8" stroke-width="2.1"/>
<text x="151.6" y="190" font-size="13.7" fill="#000" textLength="49.5" lengthAdjust="spacingAndGlyphs">Copper</text>
<line x1="112" y1="205" x2="141" y2="205" stroke="#0000ff" stroke-opacity="0.8" stroke-width="2.1"/>
<text x="151.6" y="211" font-size="13.7" fill="#000" textLength="64" lengthAdjust="spacingAndGlyphs">Tantalum</text>
<line x1="112" y1="226" x2="141" y2="226" stroke="#008000" stroke-opacity="0.8" stroke-width="2.1"/>
<text x="151.6" y="232" font-size="13.7" fill="#000" textLength="72.5" lengthAdjust="spacingAndGlyphs">Aluminium</text>
<line x1="112" y1="247" x2="141" y2="247" stroke="#1f77b4" stroke-width="2.1"/>
<line x1="126.2" y1="240.1" x2="126.2" y2="253.9" stroke="#1f77b4" stroke-width="2.1"/>
<circle cx="126.2" cy="247" r="4.6" fill="#1f77b4"/>
<text x="151.6" y="253" font-size="13.7" fill="#000" textLength="281.4" lengthAdjust="spacingAndGlyphs">MAR27689_Ei19.95meV -19.65&lt;E&lt;-5.91</text>
</svg></body></html>
